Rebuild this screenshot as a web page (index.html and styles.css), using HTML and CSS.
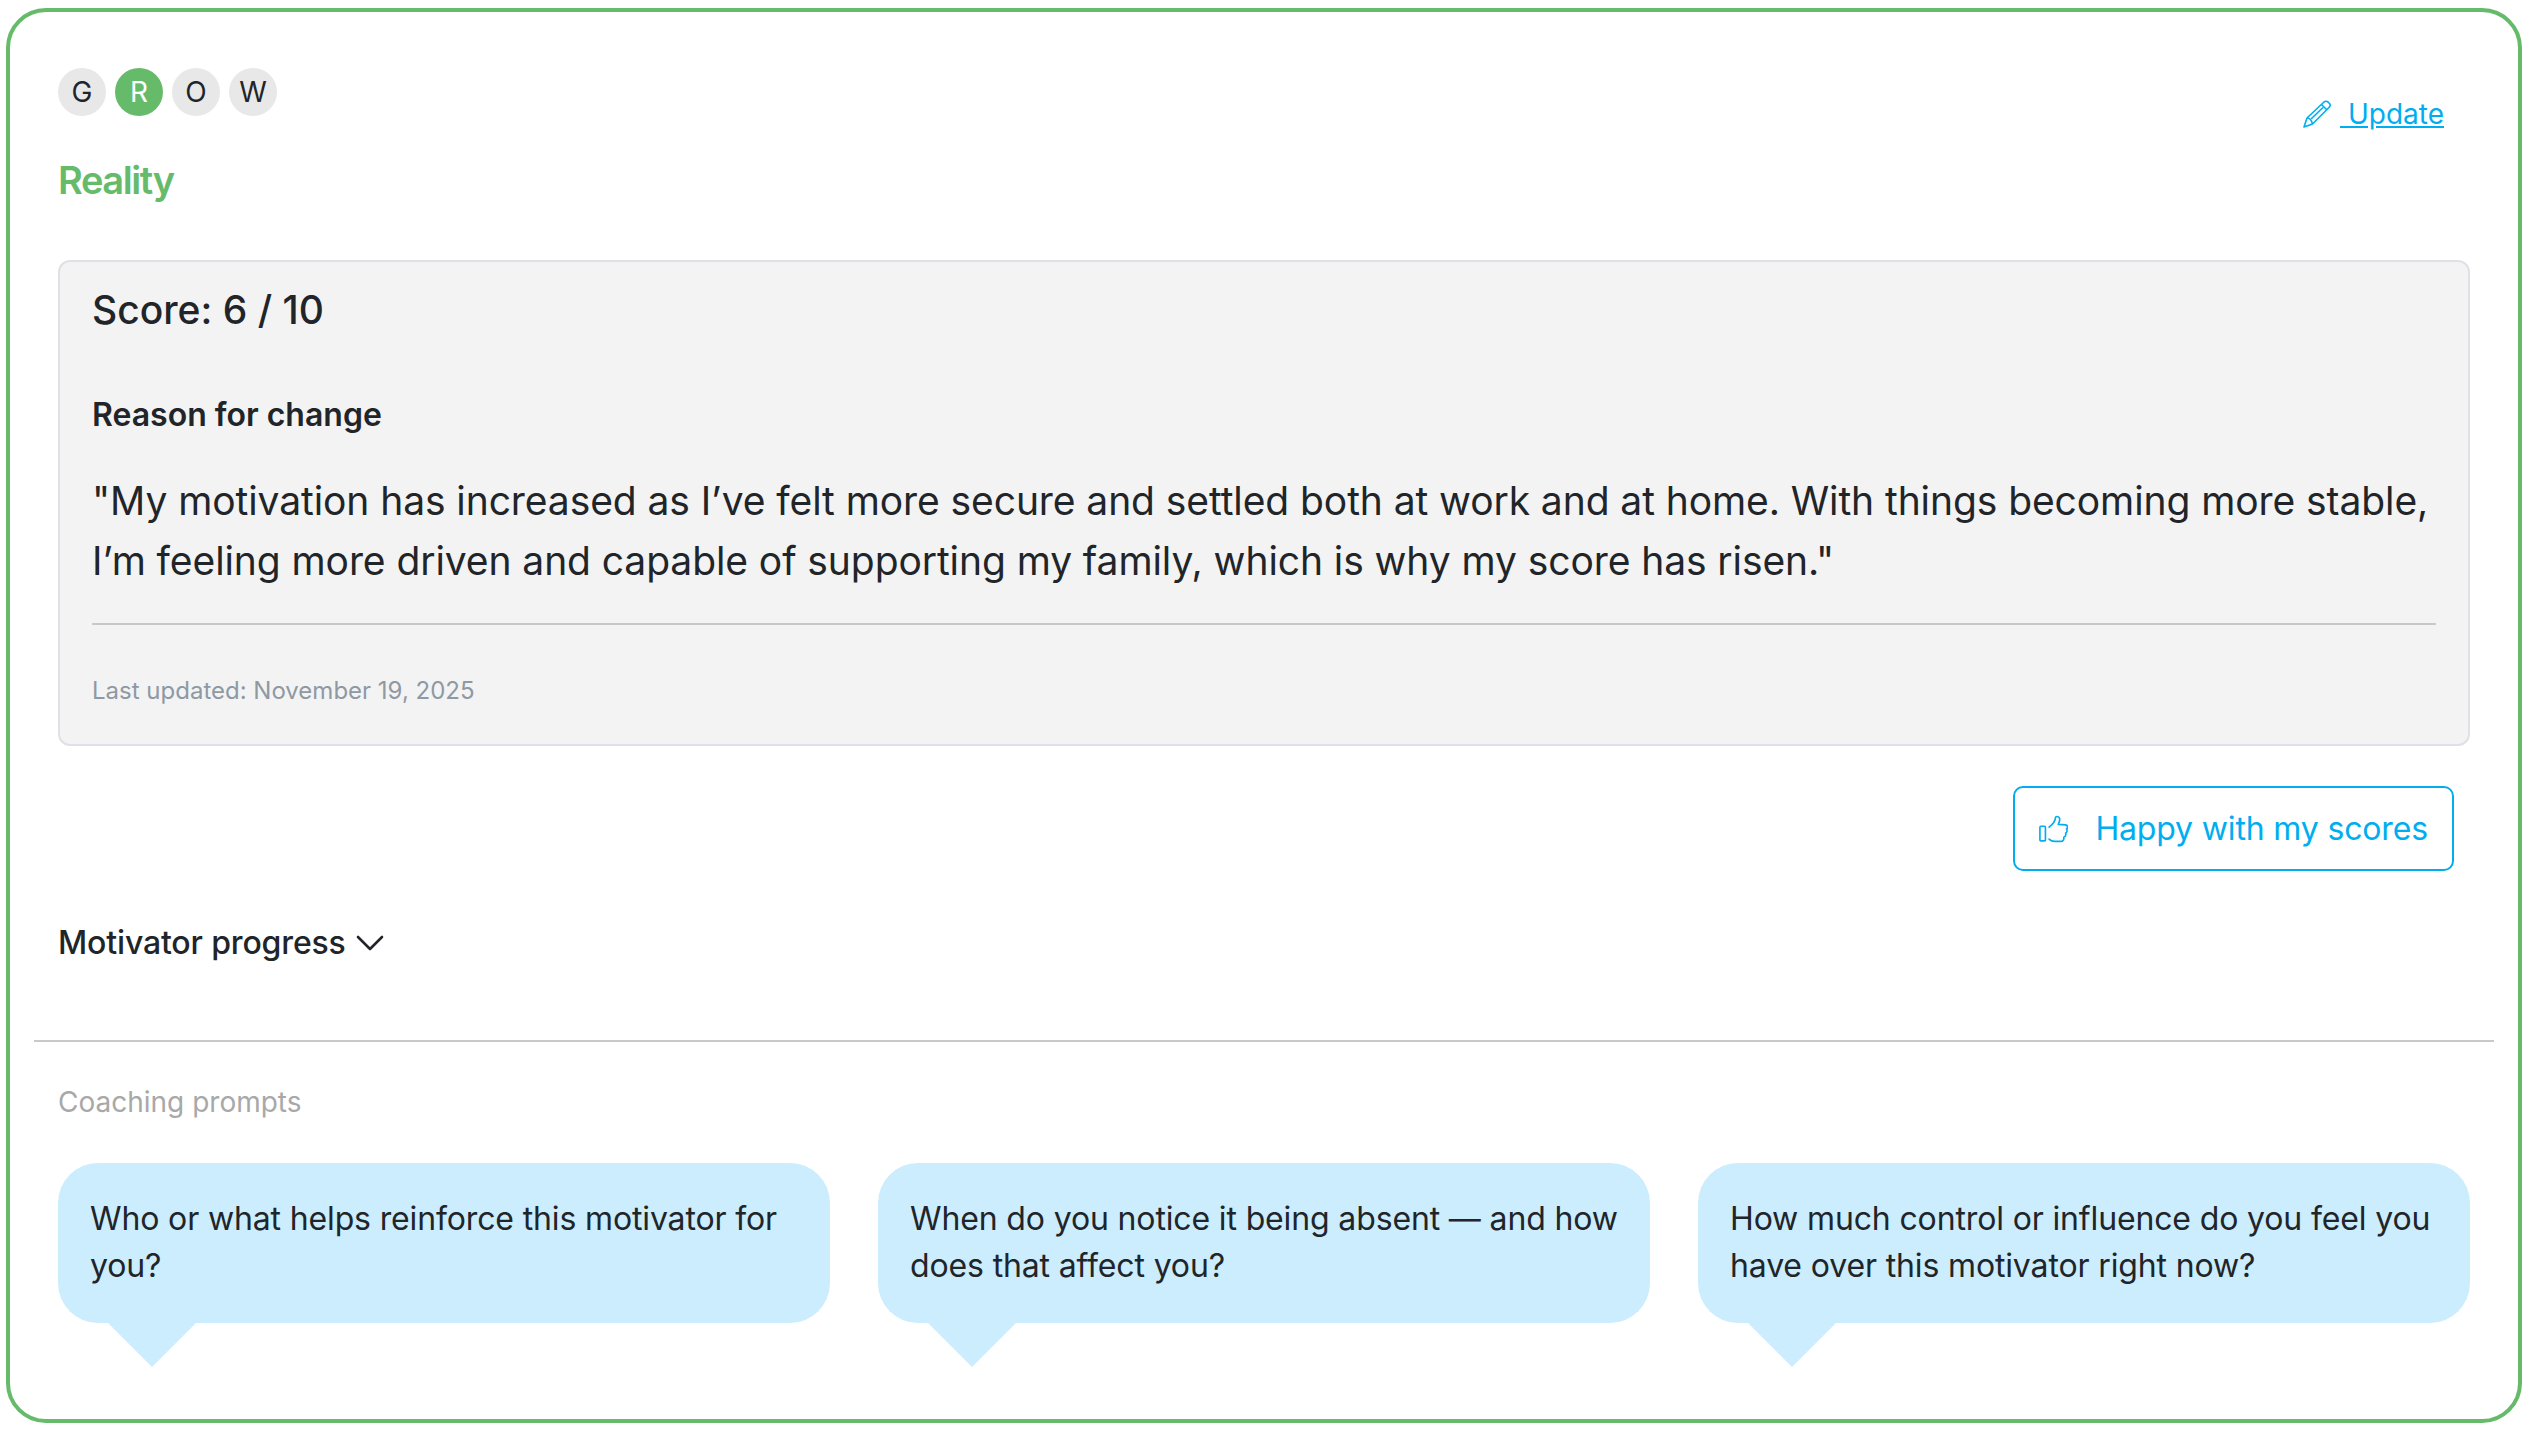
FILE: index.html
```html
<!DOCTYPE html>
<html lang="en">

<head>
    <meta charset="UTF-8">
    <meta name="viewport" content="width=device-width, initial-scale=1.0">
    <title>Reality</title>
    <link rel="stylesheet" href="styles.css">
</head>

<body>
    <div class="card">
        <div class="card-header">
            <div>
                <div class="steps">
                    <span class="step">G</span>
                    <span class="step active">R</span>
                    <span class="step">O</span>
                    <span class="step">W</span>
                </div>
                <h2 class="step-title">Reality</h2>
            </div>
            <a class="update-link" href="#">
                <svg class="pencil" viewBox="0 0 28 28" fill="none" stroke="currentColor" stroke-width="1.6" stroke-linejoin="round">
                    <path d="M1 27 L4 18 L21 2 Q23 0.5 25 2 L26.5 3.5 Q28 5.5 26 7.5 L9.5 24 Z"/>
                    <path d="M4 18 Q8 18 9.5 24"/>
                    <path d="M8 19 L20 7.5 M18.5 4.5 L24 10"/>
                </svg>
                <span class="update-text">&nbsp;Update</span>
            </a>
        </div>

        <div class="score-box">
            <div class="score">Score: 6 / 10</div>
            <div class="reason-label">Reason for change</div>
            <p class="reason">"My motivation has increased as I’ve felt more secure and settled both at work and at home. With things becoming more stable, I’m feeling more driven and capable of supporting my family, which is why my score has risen."</p>
            <hr class="box-rule">
            <div class="last-updated">Last updated: November 19, 2025</div>
        </div>

        <div class="actions">
            <button class="happy-btn" type="button">
                <svg class="thumb" viewBox="0 0 32 30" fill="none" stroke="currentColor" stroke-width="1.8" stroke-linejoin="round" stroke-linecap="round">
                    <rect x="1" y="12" width="6" height="16" rx="1"/>
                    <path d="M11 13 C15 10 18 6 18 2 C20 0.5 23 2 22.5 5 C22.3 7 21.5 8.5 21 10 L29 10.5 C31.5 11 31.5 14 30 15 C31 16.5 30.5 19 29 19.5 C29.5 21.5 28.5 23.5 27 24 C27.5 26.5 26 28.5 24 28.5 L17 28.5 C14.5 28.5 12.5 27.5 11 26"/>
                </svg>
                <span>Happy with my scores</span>
            </button>
        </div>

        <div class="motivator-toggle">
            <span>Motivator progress</span>
            <svg class="chevron" viewBox="0 0 28 16" fill="none" stroke="currentColor" stroke-width="2.6" stroke-linecap="round" stroke-linejoin="round">
                <path d="M2 2 L14 14 L26 2"/>
            </svg>
        </div>

        <hr class="card-rule">

        <div class="prompts-label">Coaching prompts</div>
        <div class="prompts">
            <div class="bubble">Who or what helps reinforce this motivator for you?</div>
            <div class="bubble">When do you notice it being absent — and how does that affect you?</div>
            <div class="bubble">How much control or influence do you feel you have over this motivator right now?</div>
        </div>
    </div>
</body>

</html>
```

FILE: styles.css
```css
body {
    margin: 0;
    padding: 8px 8px 9px 6px;
    background: #fff;
    color: #212529;
    font-family: Inter, "Noto Sans", sans-serif;
}

/* Outer card */
.card {
    box-sizing: border-box;
    height: 1415px;
    padding: 56px 48px 0 48px;
    border: 4px solid #66bb6a;
    border-radius: 40px;
}

.card-header {
    display: flex;
    justify-content: space-between;
    align-items: flex-start;
    height: 192px;
}

/* GROW steps */
.steps {
    display: flex;
    gap: 9px;
}

.step {
    display: flex;
    align-items: center;
    justify-content: center;
    width: 48px;
    height: 48px;
    border-radius: 50%;
    background: #e8e8e8;
    font-size: 28px;
}

.step.active {
    background: #66bb6a;
    color: #fff;
}

.step-title {
    margin: 39px 0 0;
    font-size: 38px;
    line-height: 50px;
    font-weight: 600;
    letter-spacing: -1.4px;
    color: #66bb6a;
}

/* Update link */
.update-link {
    display: flex;
    align-items: center;
    gap: 9px;
    margin: 26px 26px 0 0;
    color: #00aeef;
    font-size: 28px;
    line-height: 40px;
}

.pencil {
    width: 28px;
    height: 28px;
}

.update-text {
    text-decoration: underline;
}

/* Score box */
.score-box {
    box-sizing: border-box;
    height: 486px;
    padding: 21px 32px 0;
    border: 2px solid #dee2e6;
    border-radius: 12px;
    background: #f3f3f3;
}

.score {
    font-size: 39px;
    line-height: 54px;
    font-weight: 500;
}

.reason-label {
    margin-top: 54px;
    font-size: 32px;
    line-height: 48px;
    font-weight: 600;
}

.reason {
    margin: 32px 0 0;
    font-size: 39px;
    line-height: 60px;
    letter-spacing: -0.085px;
}

.box-rule {
    margin: 32px 0 0;
    border: 0;
    border-top: 2px solid #c8c8c8;
}

.last-updated {
    margin-top: 48px;
    font-size: 24px;
    line-height: 36px;
    color: #8e99a4;
}

/* Button */
.actions {
    display: flex;
    justify-content: flex-end;
    margin-top: 40px;
    padding-right: 16px;
}

.happy-btn {
    display: flex;
    align-items: center;
    gap: 27px;
    box-sizing: border-box;
    width: 441px;
    height: 85px;
    padding: 0 24px;
    border: 2px solid #00aeef;
    border-radius: 10px;
    background: #fff;
    color: #00aeef;
    font-family: inherit;
    font-size: 32px;
    letter-spacing: -0.15px;
    white-space: nowrap;
}

.thumb {
    width: 32px;
    height: 30px;
}

/* Motivator progress */
.motivator-toggle {
    display: flex;
    align-items: center;
    gap: 10px;
    margin-top: 50px;
    font-size: 32px;
    line-height: 44px;
    font-weight: 500;
    letter-spacing: -0.15px;
}

.chevron {
    width: 28px;
    height: 16px;
}

.card-rule {
    margin: 75px -24px 0;
    border: 0;
    border-top: 2px solid #c8c8c8;
}

/* Coaching prompts */
.prompts-label {
    margin-top: 40px;
    font-size: 28px;
    line-height: 40px;
    color: #a8a8a8;
}

.prompts {
    display: grid;
    grid-template-columns: repeat(3, 1fr);
    gap: 48px;
    margin-top: 41px;
}

.bubble {
    position: relative;
    box-sizing: border-box;
    height: 160px;
    padding: 32px 20px 0 32px;
    border-radius: 40px;
    background: #cbedfd;
    font-size: 32px;
    line-height: 47px;
    letter-spacing: -0.14px;
}

.bubble::after {
    content: "";
    position: absolute;
    top: 100%;
    left: 50px;
    border-style: solid;
    border-width: 44px 44px 0;
    border-color: #cbedfd transparent transparent;
}
```
